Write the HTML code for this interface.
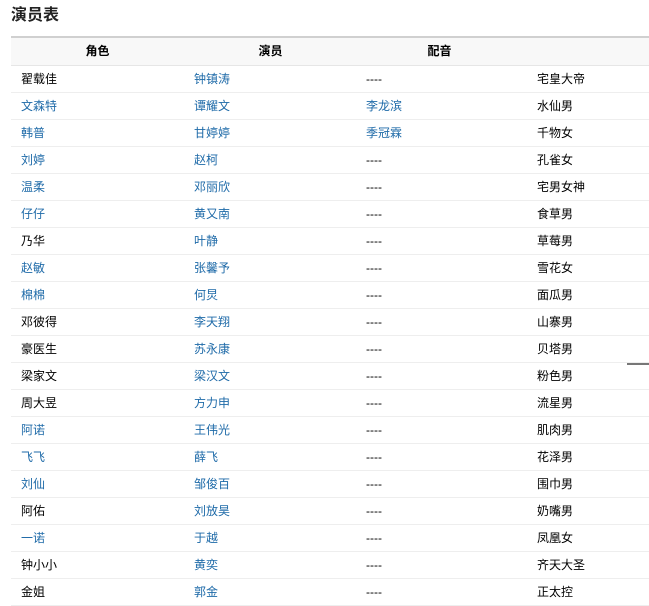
<!DOCTYPE html>
<html><head><meta charset="utf-8"><style>
body{margin:0;background:#fff;width:649px;height:605px;overflow:hidden;position:relative;font-family:"Liberation Sans","Noto Sans CJK SC",sans-serif;font-size:12px;color:#000}
h1{position:absolute;left:11px;top:5px;margin:0;font-size:16px;font-weight:bold;color:#222;line-height:22px}
.t{position:absolute;left:11px;top:36px;width:660px;border-top:2px solid #d0d0d0}
.hd{height:27px;background:#f8f8f8;border-bottom:1px solid #e6e6e6;position:relative;font-weight:bold}
.r{height:26px;border-bottom:1px solid #eee;position:relative}
.c{position:absolute;top:0;line-height:26px;white-space:nowrap}
.hd .c{line-height:27px;width:173px;text-align:center}
.a{color:#1e6aa8}
.mark{position:absolute;left:627px;top:363px;width:22px;height:2px;background:#777}
</style></head><body>
<h1>演员表</h1>
<div class="t">
<div class="hd"><span class="c" style="left:0">角色</span><span class="c" style="left:173px">演员</span><span class="c" style="left:342px">配音</span></div>
<div class="r"><span class="c" style="left:10px">翟载佳</span><span class="c a" style="left:183px">钟镇涛</span><span class="c" style="left:355px">----</span><span class="c" style="left:526px">宅皇大帝</span></div>
<div class="r"><span class="c a" style="left:10px">文森特</span><span class="c a" style="left:183px">谭耀文</span><span class="c a" style="left:355px">李龙滨</span><span class="c" style="left:526px">水仙男</span></div>
<div class="r"><span class="c a" style="left:10px">韩普</span><span class="c a" style="left:183px">甘婷婷</span><span class="c a" style="left:355px">季冠霖</span><span class="c" style="left:526px">千物女</span></div>
<div class="r"><span class="c a" style="left:10px">刘婷</span><span class="c a" style="left:183px">赵柯</span><span class="c" style="left:355px">----</span><span class="c" style="left:526px">孔雀女</span></div>
<div class="r"><span class="c a" style="left:10px">温柔</span><span class="c a" style="left:183px">邓丽欣</span><span class="c" style="left:355px">----</span><span class="c" style="left:526px">宅男女神</span></div>
<div class="r"><span class="c a" style="left:10px">仔仔</span><span class="c a" style="left:183px">黄又南</span><span class="c" style="left:355px">----</span><span class="c" style="left:526px">食草男</span></div>
<div class="r"><span class="c" style="left:10px">乃华</span><span class="c a" style="left:183px">叶静</span><span class="c" style="left:355px">----</span><span class="c" style="left:526px">草莓男</span></div>
<div class="r"><span class="c a" style="left:10px">赵敏</span><span class="c a" style="left:183px">张馨予</span><span class="c" style="left:355px">----</span><span class="c" style="left:526px">雪花女</span></div>
<div class="r"><span class="c a" style="left:10px">棉棉</span><span class="c a" style="left:183px">何炅</span><span class="c" style="left:355px">----</span><span class="c" style="left:526px">面瓜男</span></div>
<div class="r"><span class="c" style="left:10px">邓彼得</span><span class="c a" style="left:183px">李天翔</span><span class="c" style="left:355px">----</span><span class="c" style="left:526px">山寨男</span></div>
<div class="r"><span class="c" style="left:10px">豪医生</span><span class="c a" style="left:183px">苏永康</span><span class="c" style="left:355px">----</span><span class="c" style="left:526px">贝塔男</span></div>
<div class="r"><span class="c" style="left:10px">梁家文</span><span class="c a" style="left:183px">梁汉文</span><span class="c" style="left:355px">----</span><span class="c" style="left:526px">粉色男</span></div>
<div class="r"><span class="c" style="left:10px">周大昱</span><span class="c a" style="left:183px">方力申</span><span class="c" style="left:355px">----</span><span class="c" style="left:526px">流星男</span></div>
<div class="r"><span class="c a" style="left:10px">阿诺</span><span class="c a" style="left:183px">王伟光</span><span class="c" style="left:355px">----</span><span class="c" style="left:526px">肌肉男</span></div>
<div class="r"><span class="c a" style="left:10px">飞飞</span><span class="c a" style="left:183px">薛飞</span><span class="c" style="left:355px">----</span><span class="c" style="left:526px">花泽男</span></div>
<div class="r"><span class="c a" style="left:10px">刘仙</span><span class="c a" style="left:183px">邹俊百</span><span class="c" style="left:355px">----</span><span class="c" style="left:526px">围巾男</span></div>
<div class="r"><span class="c" style="left:10px">阿佑</span><span class="c a" style="left:183px">刘放昊</span><span class="c" style="left:355px">----</span><span class="c" style="left:526px">奶嘴男</span></div>
<div class="r"><span class="c a" style="left:10px">一诺</span><span class="c a" style="left:183px">于越</span><span class="c" style="left:355px">----</span><span class="c" style="left:526px">凤凰女</span></div>
<div class="r"><span class="c" style="left:10px">钟小小</span><span class="c a" style="left:183px">黄奕</span><span class="c" style="left:355px">----</span><span class="c" style="left:526px">齐天大圣</span></div>
<div class="r"><span class="c" style="left:10px">金姐</span><span class="c a" style="left:183px">郭金</span><span class="c" style="left:355px">----</span><span class="c" style="left:526px">正太控</span></div>
</div>
<div class="mark"></div>
</body></html>
